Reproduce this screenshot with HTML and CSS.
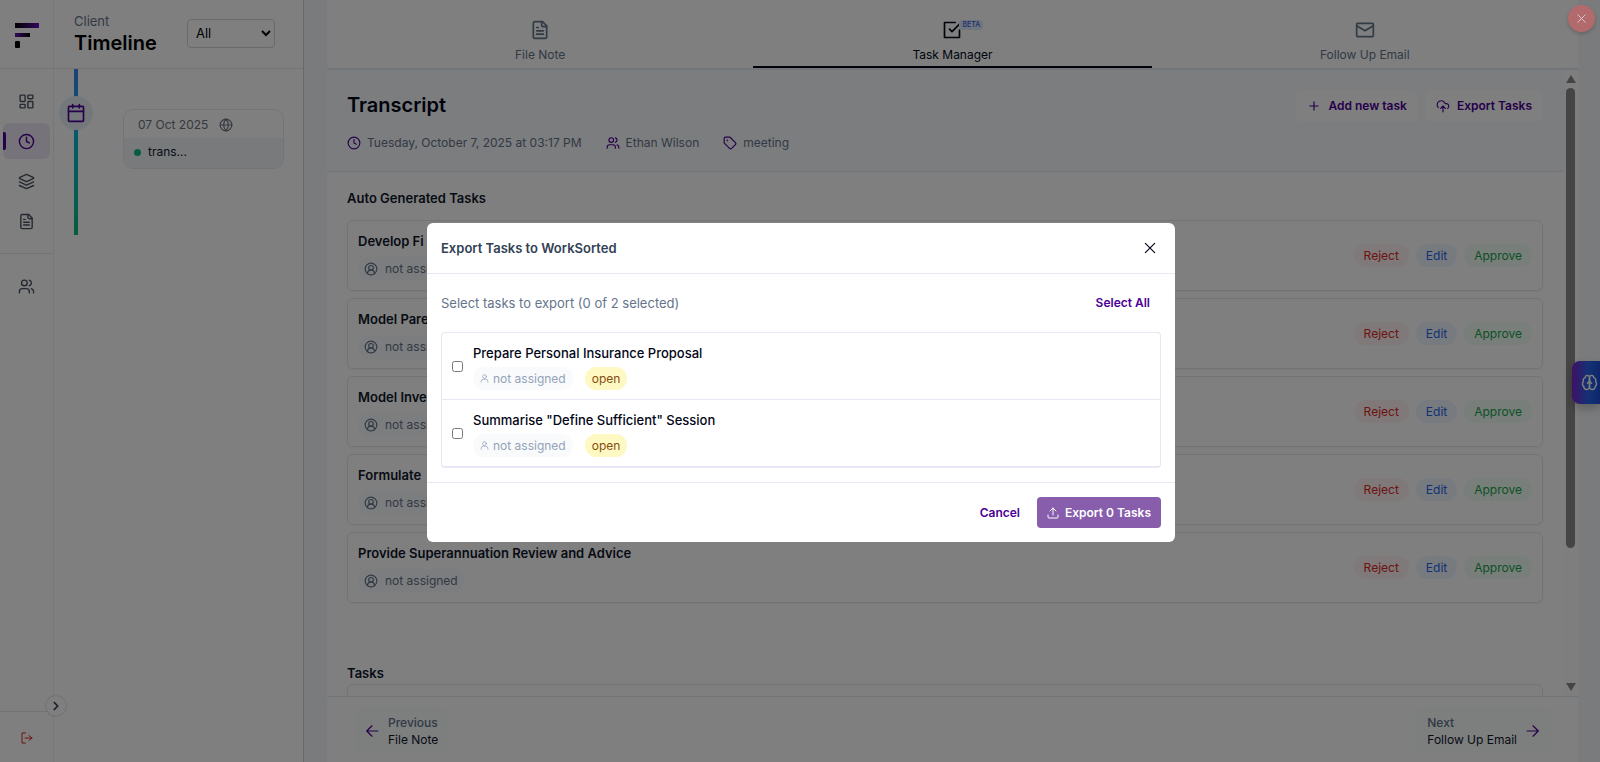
FILE: index.html
```html
<!DOCTYPE html>
<html lang="en">
<head>
  <meta charset="UTF-8">
  <title>Client Timeline</title>
  <link rel="stylesheet" href="styles.css">
</head>
<body>

  <!-- shared icons -->
  <svg class="sprite" aria-hidden="true">
    <symbol id="i-grid" viewBox="0 0 24 24"><rect x="3" y="3" width="7" height="9" rx="1"/><rect x="14" y="3" width="7" height="5" rx="1"/><rect x="14" y="12" width="7" height="9" rx="1"/><rect x="3" y="16" width="7" height="5" rx="1"/></symbol>
    <symbol id="i-clock" viewBox="0 0 24 24"><circle cx="12" cy="12" r="10"/><path d="M12 6v6l4 2"/></symbol>
    <symbol id="i-layers" viewBox="0 0 24 24"><path d="m12.83 2.18a2 2 0 0 0-1.66 0L2.6 6.08a1 1 0 0 0 0 1.83l8.58 3.91a2 2 0 0 0 1.66 0l8.58-3.9a1 1 0 0 0 0-1.83Z"/><path d="m22 17.65-9.17 4.16a2 2 0 0 1-1.66 0L2 17.65"/><path d="m22 12.65-9.17 4.16a2 2 0 0 1-1.66 0L2 12.65"/></symbol>
    <symbol id="i-file" viewBox="0 0 24 24"><path d="M15 2H6a2 2 0 0 0-2 2v16a2 2 0 0 0 2 2h12a2 2 0 0 0 2-2V7Z"/><path d="M14 2v4a2 2 0 0 0 2 2h4M10 9H8M16 13H8M16 17H8"/></symbol>
    <symbol id="i-users" viewBox="0 0 24 24"><path d="M16 21v-2a4 4 0 0 0-4-4H6a4 4 0 0 0-4 4v2"/><circle cx="9" cy="7" r="4"/><path d="M22 21v-2a4 4 0 0 0-3-3.87M16 3.13a4 4 0 0 1 0 7.75"/></symbol>
    <symbol id="i-logout" viewBox="0 0 24 24"><path d="M9 22H2V2h7M8 12h14M16 7l6 5-6 5"/></symbol>
    <symbol id="i-chevron" viewBox="0 0 24 24"><path d="m9 18 6-6-6-6"/></symbol>
    <symbol id="i-calendar" viewBox="0 0 24 24"><path d="M8 2v4M16 2v4M3 10h18"/><rect x="3" y="4" width="18" height="18" rx="1"/></symbol>
    <symbol id="i-globe" viewBox="0 0 24 24"><circle cx="12" cy="12" r="10"/><path d="M12 2a14.5 14.5 0 0 0 0 20 14.5 14.5 0 0 0 0-20M2 12h20"/></symbol>
    <symbol id="i-check" viewBox="0 0 24 24"><path d="m9 11 3 3L22 4"/><path d="M21 12v9H3V3h13"/></symbol>
    <symbol id="i-mail" viewBox="0 0 24 24"><rect x="2" y="4" width="20" height="16" rx="1"/><path d="m22 7-10 6L2 7"/></symbol>
    <symbol id="i-tag" viewBox="0 0 24 24"><path d="M12.59 2.59A2 2 0 0 0 11.17 2H4a2 2 0 0 0-2 2v7.17a2 2 0 0 0 .59 1.42l8.7 8.7a2.43 2.43 0 0 0 3.42 0l6.58-6.58a2.43 2.43 0 0 0 0-3.42Z"/><circle cx="7.5" cy="7.5" r=".5"/></symbol>
    <symbol id="i-plus" viewBox="0 0 24 24"><path d="M5 12h14M12 5v14"/></symbol>
    <symbol id="i-cloud" viewBox="0 0 24 24"><path d="M12 13v9M8 16l4-4 4 4"/><path d="M4 14.9A7 7 0 1 1 15.71 8h1.79a4.5 4.5 0 0 1 2.5 8.24"/></symbol>
    <symbol id="i-user-circle" viewBox="0 0 24 24"><circle cx="12" cy="12" r="10"/><circle cx="12" cy="10" r="4"/><path d="M6 20a6 6 0 0 1 12 0"/></symbol>
    <symbol id="i-user" viewBox="0 0 24 24"><circle cx="12" cy="7" r="5"/><path d="M3 22v-2a6 6 0 0 1 6-6h6a6 6 0 0 1 6 6v2"/></symbol>
    <symbol id="i-x" viewBox="0 0 24 24"><path d="M20 4 4 20M4 4l16 16"/></symbol>
    <symbol id="i-upload" viewBox="0 0 24 24"><path d="M12 16V2M6 8l6-6 6 6M2 16v4a2 2 0 0 0 2 2h16a2 2 0 0 0 2-2v-4"/></symbol>
    <symbol id="i-left" viewBox="0 0 24 24"><path d="M12 21l-9-9 9-9M22 12H3"/></symbol>
    <symbol id="i-right" viewBox="0 0 24 24"><path d="m12 3 9 9-9 9M2 12h19"/></symbol>
    <symbol id="i-brain" viewBox="0 0 24 24"><path d="M12 5a3 3 0 1 0-5.997.125 4 4 0 0 0-2.526 5.77 4 4 0 0 0 .556 6.588A4 4 0 1 0 12 18Z"/><path d="M12 5a3 3 0 1 1 5.997.125 4 4 0 0 1 2.526 5.77 4 4 0 0 1-.556 6.588A4 4 0 1 1 12 18Z"/><path d="M15 13a4.5 4.5 0 0 1-3-4 4.5 4.5 0 0 1-3 4"/></symbol>
  </svg>

  <div class="app">
    <nav class="sidebar">
      <a href="#" class="logo" aria-label="Home">
        <svg width="24" height="28" viewBox="0 0 24 28">
          <defs>
            <linearGradient id="bar1"><stop offset="0" stop-color="#000"/><stop offset="1" stop-color="#6a0dbd"/></linearGradient>
            <linearGradient id="bar2"><stop offset="0" stop-color="#6a0dbd"/><stop offset="1" stop-color="#000"/></linearGradient>
          </defs>
          <rect x="0" y="3" width="24" height="5" fill="url(#bar1)"/>
          <rect x="0" y="13" width="15" height="4" fill="url(#bar2)"/>
          <rect x="0" y="21" width="5" height="7" rx="1"/>
        </svg>
      </a>
      <div class="menu">
        <a href="#" aria-label="Dashboard"><svg class="icon"><use href="#i-grid"/></svg></a>
        <a href="#" class="active" aria-label="Timeline"><svg class="icon"><use href="#i-clock"/></svg></a>
        <a href="#" aria-label="Layers"><svg class="icon"><use href="#i-layers"/></svg></a>
        <a href="#" aria-label="Documents"><svg class="icon"><use href="#i-file"/></svg></a>
      </div>
      <div class="menu menu-second">
        <a href="#" aria-label="Clients"><svg class="icon"><use href="#i-users"/></svg></a>
      </div>
      <button class="expand" aria-label="Expand"><svg class="icon"><use href="#i-chevron"/></svg></button>
      <a href="#" class="logout" aria-label="Log out"><svg class="icon"><use href="#i-logout"/></svg></a>
    </nav>

    <aside class="timeline">
      <header class="timeline-header">
        <div>
          <p class="kicker">Client</p>
          <h1>Timeline</h1>
        </div>
        <select aria-label="Filter"><option>All</option></select>
      </header>
      <div class="timeline-body">
        <div class="rail"><span class="marker"><svg class="icon"><use href="#i-calendar"/></svg></span></div>
        <div class="event">
          <div class="event-date">07 Oct 2025 <svg class="icon"><use href="#i-globe"/></svg></div>
          <a href="#" class="event-name"><span class="dot"></span>trans...</a>
        </div>
      </div>
    </aside>

    <main class="main">
      <nav class="tabs">
        <a href="#"><svg class="icon"><use href="#i-file"/></svg>File Note</a>
        <a href="#" class="active"><span class="tab-icon"><svg class="icon"><use href="#i-check"/></svg><span class="beta">BETA</span></span>Task Manager</a>
        <a href="#"><svg class="icon"><use href="#i-mail"/></svg>Follow Up Email</a>
      </nav>

      <div class="scroller">
        <div class="content">
          <header class="transcript">
            <div class="transcript-top">
              <h2>Transcript</h2>
              <div class="actions">
                <button><svg class="icon"><use href="#i-plus"/></svg>Add new task</button>
                <button><svg class="icon"><use href="#i-cloud"/></svg>Export Tasks</button>
              </div>
            </div>
            <div class="meta">
              <span><svg class="icon"><use href="#i-clock"/></svg>Tuesday, October 7, 2025 at 03:17 PM</span>
              <span><svg class="icon"><use href="#i-users"/></svg>Ethan Wilson</span>
              <span><svg class="icon"><use href="#i-tag"/></svg>meeting</span>
            </div>
          </header>

          <section class="tasks">
            <h3>Auto Generated Tasks</h3>
            <div class="task">
              <div><h4>Develop Fi</h4><span class="assignee"><svg class="icon"><use href="#i-user-circle"/></svg>not assigned</span></div>
              <div class="task-actions"><button class="reject">Reject</button><button class="edit">Edit</button><button class="approve">Approve</button></div>
            </div>
            <div class="task">
              <div><h4>Model Pare</h4><span class="assignee"><svg class="icon"><use href="#i-user-circle"/></svg>not assigned</span></div>
              <div class="task-actions"><button class="reject">Reject</button><button class="edit">Edit</button><button class="approve">Approve</button></div>
            </div>
            <div class="task">
              <div><h4>Model Inve</h4><span class="assignee"><svg class="icon"><use href="#i-user-circle"/></svg>not assigned</span></div>
              <div class="task-actions"><button class="reject">Reject</button><button class="edit">Edit</button><button class="approve">Approve</button></div>
            </div>
            <div class="task">
              <div><h4>Formulate</h4><span class="assignee"><svg class="icon"><use href="#i-user-circle"/></svg>not assigned</span></div>
              <div class="task-actions"><button class="reject">Reject</button><button class="edit">Edit</button><button class="approve">Approve</button></div>
            </div>
            <div class="task">
              <div><h4>Provide Superannuation Review and Advice</h4><span class="assignee"><svg class="icon"><use href="#i-user-circle"/></svg>not assigned</span></div>
              <div class="task-actions"><button class="reject">Reject</button><button class="edit">Edit</button><button class="approve">Approve</button></div>
            </div>
          </section>

          <section class="open-tasks">
            <h3>Tasks</h3>
            <div class="task"></div>
          </section>
        </div>
        <div class="scrollbar">
          <span class="arrow-up"></span>
          <div class="track"><div class="thumb"></div></div>
          <span class="arrow-down"></span>
        </div>
      </div>

      <footer class="pager">
        <a href="#"><svg class="icon"><use href="#i-left"/></svg><span><small>Previous</small>File Note</span></a>
        <a href="#"><span><small>Next</small>Follow Up Email</span><svg class="icon"><use href="#i-right"/></svg></a>
      </footer>
    </main>
  </div>

  <button class="assistant" aria-label="Assistant"><svg class="icon"><use href="#i-brain"/></svg></button>

  <div class="overlay">
    <div class="modal" role="dialog" aria-labelledby="modal-title">
      <header class="modal-header">
        <h2 id="modal-title">Export Tasks to WorkSorted</h2>
        <button aria-label="Close"><svg class="icon"><use href="#i-x"/></svg></button>
      </header>
      <div class="modal-body">
        <div class="select-row">
          <p>Select tasks to export (0 of 2 selected)</p>
          <button>Select All</button>
        </div>
        <div class="export-list">
          <div class="export-item">
            <input type="checkbox" id="task1">
            <div>
              <label for="task1">Prepare Personal Insurance Proposal</label>
              <div class="badges"><span class="unassigned"><svg class="icon"><use href="#i-user"/></svg>not assigned</span><span class="status">open</span></div>
            </div>
          </div>
          <div class="export-item">
            <input type="checkbox" id="task2">
            <div>
              <label for="task2">Summarise "Define Sufficient" Session</label>
              <div class="badges"><span class="unassigned"><svg class="icon"><use href="#i-user"/></svg>not assigned</span><span class="status">open</span></div>
            </div>
          </div>
        </div>
      </div>
      <footer class="modal-footer">
        <button class="cancel">Cancel</button>
        <button class="export"><svg class="icon"><use href="#i-upload"/></svg>Export 0 Tasks</button>
      </footer>
    </div>
  </div>

  <button class="close-page" aria-label="Close page"><svg class="icon"><use href="#i-x"/></svg></button>

</body>
</html>
```
FILE: styles.css
```css
* {
  box-sizing: border-box;
}

body {
  font-family: Inter, "Liberation Sans", sans-serif;
  font-size: 12px;
  line-height: 18px;
  margin: 0;
  color: #0f172a;
  background: #fff;
}

h1, h2, h3, h4, p {
  margin: 0;
  font-weight: 600;
}

a {
  color: inherit;
  text-decoration: none;
}

button {
  font: inherit;
  color: inherit;
  background: none;
  border: none;
  padding: 0;
  cursor: pointer;
}

.sprite {
  position: absolute;
  width: 0;
  height: 0;
}

.icon {
  width: 14px;
  height: 14px;
  flex: none;
  fill: none;
  stroke: currentColor;
  stroke-width: 2;
  stroke-linecap: round;
  stroke-linejoin: round;
}

.app {
  display: flex;
  height: 100vh;
  overflow: hidden;
  background: #f4f7fb;
}

/* Sidebar */
.sidebar {
  width: 54px;
  flex: none;
  display: flex;
  flex-direction: column;
  position: relative;
  background: #fff;
  border-right: 1px solid #eceef1;
}

.logo {
  height: 69px;
  display: flex;
  align-items: center;
  justify-content: center;
  border-bottom: 1px solid #e5e7eb;
}

.menu {
  display: flex;
  flex-direction: column;
  gap: 4px;
  padding: 14px 3px;
  color: #4b5563;
}

.menu a {
  height: 36px;
  display: flex;
  align-items: center;
  justify-content: center;
  border-radius: 6px;
}

.menu .icon {
  width: 17px;
  height: 17px;
}

.menu .active {
  color: #4b0096;
  background: #eee6f6;
  position: relative;
}

.menu .active::before {
  content: "";
  position: absolute;
  left: 0;
  width: 3px;
  height: 18px;
  border-radius: 0 2px 2px 0;
  background: #4b0096;
}

.menu-second {
  flex: 1;
  border-top: 1px solid #e5e7eb;
}

.expand {
  position: absolute;
  right: -13px;
  bottom: 46px;
  width: 20px;
  height: 20px;
  display: flex;
  align-items: center;
  justify-content: center;
  border-radius: 50%;
  color: #374151;
  background: #fff;
  box-shadow: 0 0 2px rgba(0, 0, 0, 0.3);
  z-index: 1;
}

.expand .icon {
  stroke-width: 3;
}

.logout {
  height: 51px;
  display: flex;
  align-items: center;
  justify-content: center;
  padding-top: 2px;
  border-top: 1px solid #e5e7eb;
  color: #dc2626;
}

.logout .icon {
  width: 12px;
  height: 12px;
}

/* Timeline */
.timeline {
  width: 250px;
  flex: none;
  background: #fff;
  border-right: 1px solid #cbd5e1;
}

.timeline-header {
  height: 69px;
  display: flex;
  align-items: center;
  justify-content: space-between;
  padding: 0 28px 2px 20px;
  border-bottom: 1px solid #e5e7eb;
}

.kicker {
  font-size: 13px;
  line-height: 20px;
  color: #64748b;
  font-weight: 400;
}

.timeline-header h1 {
  font-size: 20px;
  line-height: 25px;
  color: #000;
}

.timeline-header select {
  width: 88px;
  height: 29px;
  padding: 0 4px;
  font: inherit;
  font-size: 13px;
  color: #000;
  background: #fff;
  border: 1px solid #d1d5db;
  border-radius: 4px;
}

.timeline-body {
  display: flex;
  align-items: flex-start;
  justify-content: space-between;
  padding: 0 19px 0 20px;
}

.rail {
  width: 4px;
  height: 166px;
  display: flex;
  justify-content: center;
  padding-top: 27px;
  background: linear-gradient(#3b82f6, #06b6d4 40%, #10b981);
}

.marker {
  width: 34px;
  height: 34px;
  flex: none;
  display: flex;
  align-items: center;
  justify-content: center;
  border-radius: 50%;
  background: #e9f1f5;
  color: #4b0096;
}

.marker .icon {
  width: 20px;
  height: 20px;
}

.event {
  width: 161px;
  margin-top: 40px;
  overflow: hidden;
  border: 1px solid #e2e8f0;
  border-radius: 10px;
}

.event-date {
  display: flex;
  align-items: center;
  gap: 11px;
  padding: 6px 14px 4px;
  color: #6b7280;
}

.event-name {
  display: flex;
  align-items: center;
  gap: 7px;
  padding: 5px 10px 7px;
  background: #f1f5f9;
}

.dot {
  width: 7px;
  height: 7px;
  border-radius: 50%;
  background: #10b981;
}

/* Main */
.main {
  flex: 1;
  min-width: 0;
  display: flex;
  flex-direction: column;
  margin: 0 22px 0 23px;
  background: #fff;
}

.tabs {
  height: 70px;
  flex: none;
  display: flex;
  gap: 14px;
  padding: 0 14px;
  border-bottom: 2px solid #e2e8f0;
  color: #64748b;
}

.tabs a {
  flex: 1;
  display: flex;
  flex-direction: column;
  align-items: center;
  gap: 6px;
  padding-top: 20px;
  border-bottom: 2px solid transparent;
}

.tabs .active {
  color: #020617;
  border-color: #020617;
}

.tabs .icon {
  width: 20px;
  height: 20px;
}

.tab-icon {
  height: 20px;
  position: relative;
}

.beta {
  position: absolute;
  top: 0;
  left: 17px;
  padding: 0 3px;
  font-size: 7px;
  line-height: 10px;
  font-weight: 500;
  color: #3b5bdb;
  background: #dbeafe;
  border-radius: 4px;
}

.scroller {
  flex: 1;
  min-height: 0;
  display: flex;
}

.content {
  flex: 1;
  overflow: hidden;
}

.transcript {
  padding: 20px 20px 19px;
  background: #f8fafc;
  border-bottom: 1px solid #e2e8f0;
}

.transcript-top {
  display: flex;
  justify-content: space-between;
}

.transcript h2 {
  font-size: 20px;
  line-height: 30px;
  color: #020617;
}

.actions {
  display: flex;
  gap: 7px;
}

.actions button {
  height: 32px;
  display: flex;
  align-items: center;
  gap: 7px;
  padding: 0 11px;
  font-weight: 600;
  color: #4b0096;
  background: #fff;
  border-radius: 6px;
}

.meta {
  display: flex;
  gap: 24px;
  margin-top: 12px;
  color: #64748b;
}

.meta span {
  display: flex;
  align-items: center;
  gap: 6px;
}

.meta .icon {
  color: #4b0096;
}

.tasks, .open-tasks {
  padding: 0 20px;
}

.tasks {
  padding-top: 16px;
}

.tasks h3, .open-tasks h3 {
  font-size: 13px;
  line-height: 21px;
}

.tasks h3 {
  margin-bottom: 11px;
}

.task {
  height: 71px;
  display: flex;
  align-items: flex-start;
  justify-content: space-between;
  margin-bottom: 7px;
  padding: 10px;
  border: 1px solid #e5e7eb;
  border-radius: 6px;
  box-shadow: 0 1px 2px rgba(0, 0, 0, 0.05);
}

.task h4 {
  font-size: 13px;
  line-height: 20px;
}

.assignee {
  display: inline-flex;
  align-items: center;
  gap: 7px;
  margin-top: 6px;
  padding: 3px 6px;
  color: #64748b;
  background: #f8fafc;
  border-radius: 12px;
}

.task-actions {
  display: flex;
  align-self: center;
  gap: 7px;
}

.task-actions button {
  height: 23px;
  padding: 0 10px;
  border-radius: 12px;
}

.reject {
  color: #dc2626;
  background: #fef2f2;
}

.edit {
  color: #2563eb;
  background: #eff6ff;
}

.approve {
  color: #16a34a;
  background: #f0fdf4;
}

.open-tasks {
  margin-top: 60px;
}

.open-tasks .task {
  margin: 0;
}

/* Scrollbar */
.scrollbar {
  width: 15px;
  flex: none;
  display: flex;
  flex-direction: column;
  align-items: center;
  gap: 5px;
  padding: 5px 0;
  background: #fcfcfc;
}

.arrow-up, .arrow-down {
  border: 5px solid transparent;
}

.arrow-up {
  border-top: none;
  border-bottom: 8px solid #8b8b8b;
}

.arrow-down {
  border-bottom: none;
  border-top: 8px solid #8b8b8b;
}

.track {
  flex: 1;
}

.thumb {
  width: 9px;
  height: 78%;
  border-radius: 5px;
  background: #8b8b8b;
}

.pager {
  display: flex;
  justify-content: space-between;
  padding: 11px 27px 8px;
  border-top: 1px solid #e2e8f0;
}

.pager a {
  display: flex;
  align-items: center;
  gap: 9px;
  padding: 6px 11px;
  background: #fbfcfd;
  border-radius: 4px;
}

.pager span {
  line-height: 17px;
}

.pager small {
  display: block;
  font-size: 12px;
  font-weight: 500;
  color: #64748b;
}

.pager .icon {
  color: #4b0096;
}

/* Modal */
.overlay {
  position: fixed;
  inset: 0;
  z-index: 10;
  display: flex;
  align-items: center;
  justify-content: center;
  padding: 3px 0 0 2px;
  background: rgba(0, 0, 0, 0.5);
}

.modal {
  width: 748px;
  max-width: 94%;
  background: #fff;
  border-radius: 6px;
}

.modal-header {
  display: flex;
  align-items: center;
  justify-content: space-between;
  padding: 14px 18px 14px 14px;
  border-bottom: 1px solid #e8e8f4;
}

.modal-header h2 {
  font-size: 13px;
  line-height: 22px;
  color: #334155;
}

.modal-header button {
  height: 14px;
  color: #020617;
}

.modal-body {
  padding: 14px;
}

.select-row {
  display: flex;
  align-items: center;
  justify-content: space-between;
  height: 30px;
  margin-bottom: 14px;
}

.select-row p {
  font-size: 13px;
  font-weight: 400;
  color: #64748b;
}

.select-row button {
  padding: 0 11px;
  font-weight: 600;
  color: #4b0096;
}

.export-list {
  border: 1px solid #e8e8f4;
  border-bottom-width: 2px;
  border-radius: 4px;
}

.export-item {
  display: flex;
  align-items: center;
  gap: 10px;
  padding: 10px 10px 9px;
}

.export-item + .export-item {
  border-top: 1px solid #e8e8f4;
}

.export-item input {
  width: 11px;
  height: 11px;
  margin: 0;
}

.export-item label {
  display: block;
  font-size: 13px;
  line-height: 20px;
  font-weight: 500;
  color: #020617;
}

.badges {
  display: flex;
  gap: 12px;
  margin-top: 4px;
}

.badges span {
  display: flex;
  align-items: center;
  gap: 4px;
  height: 23px;
  padding: 0 7px;
  border-radius: 12px;
}

.unassigned {
  color: #94a3b8;
  background: #f8fafc;
}

.unassigned .icon {
  width: 9px;
  height: 9px;
}

.badges .status {
  color: #854d0e;
  background: #fef9c3;
}

.modal-footer {
  display: flex;
  justify-content: flex-end;
  gap: 7px;
  padding: 14px;
  border-top: 1px solid #e8e8f4;
}

.modal-footer button {
  height: 31px;
  display: flex;
  align-items: center;
  gap: 6px;
  padding: 0 10px;
  font-weight: 600;
}

.cancel {
  color: #4b0096;
}

.modal-footer .export {
  color: #fff;
  background: #875dac;
  border-radius: 4px;
}

.export .icon {
  width: 12px;
  height: 12px;
}

/* Floating buttons */
.assistant {
  position: fixed;
  right: 0;
  top: 361px;
  width: 28px;
  height: 43px;
  display: flex;
  align-items: center;
  justify-content: flex-end;
  padding-right: 2px;
  color: #fff;
  background: linear-gradient(90deg, #7e22ce, #2563eb 60%, #1d4ed8);
  border-radius: 8px 0 0 8px;
  box-shadow: 0 4px 10px rgba(0, 0, 0, 0.25);
}

.assistant .icon {
  width: 17px;
  height: 17px;
}

.close-page {
  position: fixed;
  z-index: 20;
  top: 5px;
  right: 5px;
  width: 27px;
  height: 27px;
  display: flex;
  align-items: center;
  justify-content: center;
  color: #d9d0d1;
  background: #b36a6c;
  border-radius: 50%;
  box-shadow: 0 2px 4px rgba(0, 0, 0, 0.2);
}

.close-page .icon {
  width: 11px;
  height: 11px;
}
```
